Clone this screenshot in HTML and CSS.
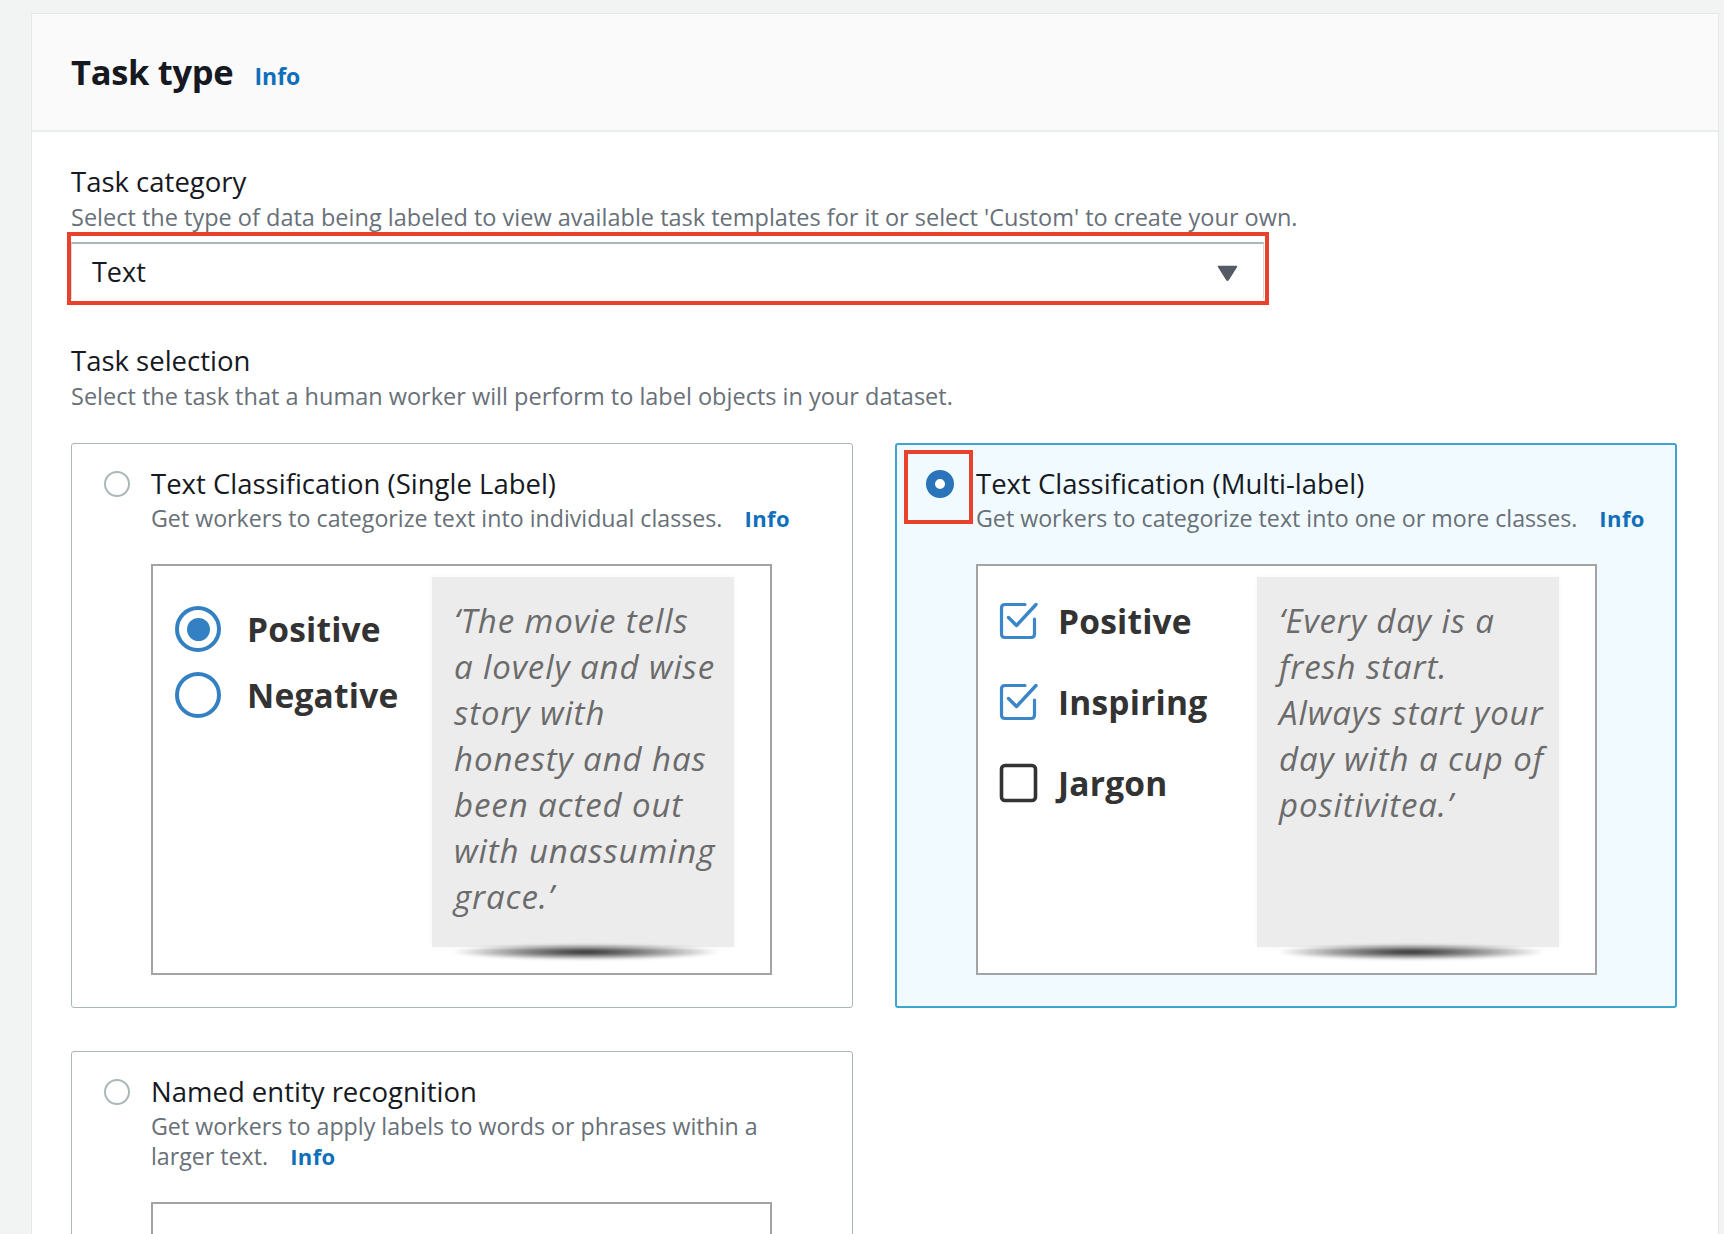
FILE: index.html
```html
<!DOCTYPE html>
<html lang="en">
<head>
<meta charset="utf-8">
<title>Task type</title>
<link rel="stylesheet" href="styles.css">
</head>
<body>
<div class="page">
  <section class="panel">
    <header class="panel-header">
      <h2 class="panel-title">Task type</h2>
      <a class="info" href="#">Info</a>
    </header>
    <div class="panel-body">
      <div class="field">
        <div class="label">Task category</div>
        <div class="desc">Select the type of data being labeled to view available task templates for it or select 'Custom' to create your own.</div>
        <div class="highlight select-wrap">
          <div class="select">
            <span class="select-value">Text</span>
            <svg class="caret" width="21" height="16" viewBox="0 0 21 16"><path d="M1.5 1.5 H19.5 L11.3 14.6 Q10.5 15.8 9.7 14.6 Z" fill="#545b64" stroke="#545b64" stroke-width="1.5" stroke-linejoin="round"/></svg>
          </div>
        </div>
      </div>

      <div class="field field-tiles">
        <div class="label">Task selection</div>
        <div class="desc">Select the task that a human worker will perform to label objects in your dataset.</div>
        <div class="tiles">
          <div class="tile">
            <span class="radio"></span>
            <div class="tile-content">
              <div class="tile-title">Text Classification (Single Label)</div>
              <div class="tile-desc">Get workers to categorize text into individual classes. <a class="info" href="#">Info</a></div>
              <div class="preview">
                <div class="choices radios">
                  <div class="choice"><span class="big-radio checked"></span><span class="choice-text">Positive</span></div>
                  <div class="choice"><span class="big-radio"></span><span class="choice-text">Negative</span></div>
                </div>
                <div class="paper">
                  <p class="quote">‘The movie tells<br>a lovely and wise<br>story with<br>honesty and has<br>been acted out<br>with unassuming<br>grace.’</p>
                </div>
              </div>
            </div>
          </div>

          <div class="tile selected">
            <span class="highlight radio-highlight"></span>
            <span class="radio on"></span>
            <div class="tile-content">
              <div class="tile-title">Text Classification (Multi-label)</div>
              <div class="tile-desc single-line">Get workers to categorize text into one or more classes. <a class="info" href="#">Info</a></div>
              <div class="preview">
                <div class="choices checks">
                  <div class="choice">
                    <svg class="check" width="40" height="38" viewBox="0 0 40 38"><path d="M26 2.5 H6 Q2.5 2.5 2.5 6 V32 Q2.5 35.5 6 35.5 H32 Q35.5 35.5 35.5 32 V17" fill="none" stroke="#3a86c8" stroke-width="3.2" stroke-linecap="round"/><path d="M9.5 15.5 L17.5 23.5 L37 2.5" fill="none" stroke="#3a86c8" stroke-width="3.4" stroke-linecap="round" stroke-linejoin="round"/></svg>
                    <span class="choice-text">Positive</span>
                  </div>
                  <div class="choice">
                    <svg class="check" width="40" height="38" viewBox="0 0 40 38"><path d="M26 2.5 H6 Q2.5 2.5 2.5 6 V32 Q2.5 35.5 6 35.5 H32 Q35.5 35.5 35.5 32 V17" fill="none" stroke="#3a86c8" stroke-width="3.2" stroke-linecap="round"/><path d="M9.5 15.5 L17.5 23.5 L37 2.5" fill="none" stroke="#3a86c8" stroke-width="3.4" stroke-linecap="round" stroke-linejoin="round"/></svg>
                    <span class="choice-text">Inspiring</span>
                  </div>
                  <div class="choice">
                    <svg class="check" width="40" height="40" viewBox="0 0 40 40"><rect x="2.5" y="2.5" width="34" height="35" rx="3.5" fill="none" stroke="#333" stroke-width="3.6"/></svg>
                    <span class="choice-text">Jargon</span>
                  </div>
                </div>
                <div class="paper">
                  <p class="quote">‘Every day is a<br>fresh start.<br>Always start your<br>day with a cup of<br>positivitea.’</p>
                </div>
              </div>
            </div>
          </div>

          <div class="tile">
            <span class="radio"></span>
            <div class="tile-content">
              <div class="tile-title">Named entity recognition</div>
              <div class="tile-desc">Get workers to apply labels to words or phrases within a<br>larger text. <a class="info" href="#">Info</a></div>
              <div class="preview"></div>
            </div>
          </div>
        </div>
      </div>
    </div>
  </section>
</div>
</body>
</html>
```

FILE: styles.css
```css
* { box-sizing: border-box; }

html, body {
  margin: 0;
  padding: 0;
  height: 100%;
  overflow: hidden;
  background: #f2f3f3;
  font-family: "Open Sans", "Noto Sans", sans-serif;
  color: #16191f;
}

.page {
  padding: 13px 5px 0 31px;
}

.panel {
  background: #ffffff;
  border: 1px solid #e4e8e8;
  border-bottom: none;
  min-height: 1300px;
}

.panel-header {
  height: 118px;
  background: #fafafa;
  border-bottom: 2px solid #eaeded;
  display: flex;
  align-items: baseline;
  padding: 37px 0 0 39px;
}

.panel-title {
  margin: 0;
  font-size: 34.5px;
  font-weight: 700;
  line-height: 42px;
  letter-spacing: -0.3px;
  color: #16191f;
}

.info {
  color: #0f6fba;
  font-weight: 700;
  font-size: 23px;
  text-decoration: none;
}

.panel-header .info {
  margin-left: 21px;
}

.panel-body {
  padding: 31px 40px 0 39px;
}

.label {
  font-size: 27.5px;
  line-height: 38px;
  color: #16191f;
}

.desc {
  font-size: 23.5px;
  line-height: 30px;
  color: #687078;
  margin-top: 1px;
}

.highlight {
  border: 4px solid #e8412c;
}

.select-wrap {
  width: 1202px;
  margin-left: -4px;
  padding: 6px 1px 2px 0;
}

.select {
  height: 57px;
  border: 1px solid #d5dbdb;
  border-top: 2px solid #aab7b8;
  border-bottom: none;
  display: flex;
  align-items: center;
  justify-content: space-between;
  padding: 0 25px 0 20px;
}

.select-value {
  font-size: 27px;
  color: #16191f;
}

.caret {
  display: block;
  margin-top: 2px;
}

.field-tiles {
  margin-top: 37px;
}

.tiles {
  margin-top: 32px;
  display: grid;
  grid-template-columns: 782px 782px;
  column-gap: 42px;
  row-gap: 43px;
}

.tile {
  position: relative;
  border: 1px solid #aab7b8;
  border-radius: 3px;
  background: #ffffff;
  padding: 21px 36px 32px 32px;
  display: flex;
  align-items: flex-start;
  gap: 21px;
}

.tile.selected {
  border: 2px solid #3fa4cf;
  background: #f1faff;
  padding: 20px 35px 31px 31px;
}

.radio {
  flex: none;
  width: 26px;
  height: 26px;
  margin-top: 6px;
  border-radius: 50%;
  border: 2px solid #aab7b8;
  background: #ffffff;
}

.radio.on {
  width: 28px;
  height: 28px;
  margin-top: 5px;
  margin-left: -2px;
  margin-right: 1px;
  border: 9px solid #2a74b9;
}

.radio-highlight {
  position: absolute;
  left: 7px;
  top: 5px;
  width: 69px;
  height: 74px;
}

.tile-content {
  flex: 1;
  min-width: 0;
}

.tile-title {
  font-size: 27.5px;
  line-height: 38px;
  color: #16191f;
}

.tile-desc {
  font-size: 23.2px;
  line-height: 30px;
  color: #687078;
}

.tile-desc.single-line {
  white-space: nowrap;
}

.tile-desc .info {
  margin-left: 16px;
  font-size: 22px;
  letter-spacing: 0.4px;
}

.preview {
  margin-top: 31px;
  width: 621px;
  height: 411px;
  border: 2px solid #a3a3a3;
  background: #ffffff;
  display: flex;
}

.choices {
  width: 279px;
  flex: none;
}

.radios {
  padding: 30px 0 0 22px;
}

.checks {
  padding: 14px 0 0 21px;
}

.choice {
  display: flex;
  align-items: center;
}

.radios .choice {
  height: 66px;
}

.checks .choice {
  height: 81px;
}

.big-radio {
  flex: none;
  width: 46px;
  height: 46px;
  border-radius: 50%;
  border: 4px solid #3381c2;
  position: relative;
  background: #ffffff;
}

.big-radio.checked::after {
  content: "";
  position: absolute;
  left: 7.5px;
  top: 7.5px;
  width: 23px;
  height: 23px;
  border-radius: 50%;
  background: #3381c2;
}

.radios .choice-text {
  margin-left: 26px;
}

.checks .choice-text {
  margin-left: 19px;
}

.check {
  flex: none;
  display: block;
}

.choice-text {
  font-size: 33.5px;
  font-weight: 700;
  color: #333333;
  letter-spacing: 0.2px;
}

.paper {
  position: relative;
  margin-top: 11px;
  width: 302px;
  height: 370px;
  background: #ececec;
  padding: 21px 0 0 22px;
  box-shadow: 0 0 6px rgba(0, 0, 0, 0.04);
}

.paper::after {
  content: "";
  position: absolute;
  left: 18px;
  right: 12px;
  bottom: -13px;
  height: 16px;
  background: radial-gradient(ellipse at center, rgba(0, 0, 0, 0.85) 0%, rgba(0, 0, 0, 0.45) 35%, rgba(0, 0, 0, 0) 70%);
  filter: blur(1.5px);
}

.quote {
  margin: 0;
  font-size: 33px;
  font-style: italic;
  line-height: 46px;
  color: #6b6b6b;
  white-space: nowrap;
  letter-spacing: 0.9px;
}
```
